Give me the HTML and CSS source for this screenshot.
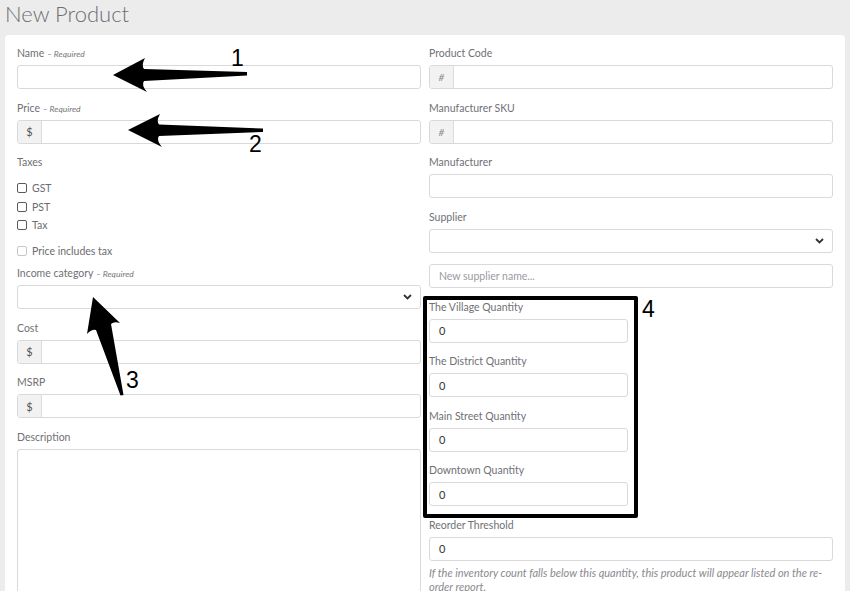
FILE: index.html
```html
<!DOCTYPE html>
<html>
<head>
<meta charset="utf-8">
<link rel="stylesheet" href="styles.css">
</head>
<body>
<div class="page">
  <h1 class="title">New Product</h1>
  <div class="card">
    <div class="col">
      <div class="field">
        <div class="label">Name <span class="req">– Required</span></div>
        <div class="input"></div>
      </div>
      <div class="field">
        <div class="label">Price <span class="req">– Required</span></div>
        <div class="input group"><span class="addon">$</span><span class="fill"></span></div>
      </div>
      <div class="label">Taxes</div>
      <div class="checks">
        <label class="check"><span class="box"></span>GST</label>
        <label class="check"><span class="box"></span>PST</label>
        <label class="check"><span class="box"></span>Tax</label>
      </div>
      <label class="check disabled"><span class="box"></span>Price includes tax</label>
      <div class="field income">
        <div class="label">Income category <span class="req">– Required</span></div>
        <div class="input select"><svg class="chev" width="9" height="6" viewBox="0 0 9 6"><path d="M1 1 L4.5 4.5 L8 1" fill="none" stroke="#333" stroke-width="1.8"/></svg></div>
      </div>
      <div class="field">
        <div class="label">Cost</div>
        <div class="input group"><span class="addon">$</span><span class="fill"></span></div>
      </div>
      <div class="field">
        <div class="label">MSRP</div>
        <div class="input group"><span class="addon">$</span><span class="fill"></span></div>
      </div>
      <div class="field">
        <div class="label">Description</div>
        <div class="input textarea"></div>
      </div>
    </div>
    <div class="col">
      <div class="field">
        <div class="label">Product Code</div>
        <div class="input group"><span class="addon hash">#</span><span class="fill"></span></div>
      </div>
      <div class="field">
        <div class="label">Manufacturer SKU</div>
        <div class="input group"><span class="addon hash">#</span><span class="fill"></span></div>
      </div>
      <div class="field">
        <div class="label">Manufacturer</div>
        <div class="input"></div>
      </div>
      <div class="field">
        <div class="label">Supplier</div>
        <div class="input select"><svg class="chev" width="9" height="6" viewBox="0 0 9 6"><path d="M1 1 L4.5 4.5 L8 1" fill="none" stroke="#333" stroke-width="1.8"/></svg></div>
      </div>
      <div class="field">
        <div class="input"><span class="placeholder">New supplier name...</span></div>
      </div>
      <div class="field qty">
        <div class="label">The Village Quantity</div>
        <div class="input"><span class="value">0</span></div>
      </div>
      <div class="field qty">
        <div class="label">The District Quantity</div>
        <div class="input"><span class="value">0</span></div>
      </div>
      <div class="field qty">
        <div class="label">Main Street Quantity</div>
        <div class="input"><span class="value">0</span></div>
      </div>
      <div class="field qty">
        <div class="label">Downtown Quantity</div>
        <div class="input"><span class="value">0</span></div>
      </div>
      <div class="field reorder">
        <div class="label">Reorder Threshold</div>
        <div class="input"><span class="value">0</span></div>
        <p class="help">If the inventory count falls below this quantity, this product will appear listed on the re-order report.</p>
      </div>
    </div>
  </div>

  <div class="highlight"></div>
  <svg class="annot" width="850" height="591" viewBox="0 0 850 591">
    <path d="M113,75 L145,58 Q141,65 144,69 L247,72 L247,75.5 L144,81 Q141,85 147,92 Z" fill="#000"/>
    <path d="M128,130 L160,114 Q156,121 159,124.5 L263,128.5 L263,132 L159,136 Q156,140 162,147 Z" fill="#000"/>
    <path d="M93,297 L120,323 Q114,321 111,324 L123.5,395 L120.5,395.5 L96,330 Q92,329 87,334 Z" fill="#000"/>
    <text x="231" y="66" class="num">1</text>
    <text x="249" y="152" class="num">2</text>
    <text x="126" y="388" class="num">3</text>
    <text x="642" y="317" class="num">4</text>
  </svg>
</div>
</body>
</html>
```

FILE: styles.css
```css
* { box-sizing: border-box; }
html, body {
  margin: 0;
  padding: 0;
  background: #ececec;
}
body {
  font-family: Lato, "Open Sans", sans-serif;
  color: #6b6b70;
  width: 850px;
  height: 591px;
  overflow: hidden;
}
.page {
  position: relative;
  width: 850px;
  height: 591px;
}
.title {
  margin: 0;
  padding-left: 5px;
  font-size: 22px;
  line-height: 27px;
  font-weight: 300;
  color: #6e6e73;
  height: 27px;
}
.card {
  margin: 8px 0 0 5px;
  width: 840px;
  height: 600px;
  background: #fff;
  border-radius: 4px;
  padding: 11px 12px 0 12px;
  display: flex;
  gap: 8px;
}
.col {
  width: 404px;
  display: flex;
  flex-direction: column;
}
.field {
  margin-bottom: 11.5px;
}
.label {
  font-size: 10.5px;
  line-height: 14px;
  height: 14px;
  margin-bottom: 5px;
  color: #707075;
  white-space: nowrap;
}
.req {
  font-size: 8.5px;
  font-style: italic;
  color: #77777c;
}
.input {
  height: 24px;
  border: 1px solid #d9d9dc;
  border-radius: 3px;
  background: #fff;
  display: flex;
  align-items: center;
  font-size: 11px;
  padding: 0 9px;
  position: relative;
}
.input.group {
  padding: 0;
  overflow: hidden;
}
.addon {
  width: 24px;
  height: 100%;
  background: #f2f2f3;
  border-right: 1px solid #dcdcdf;
  display: flex;
  align-items: center;
  justify-content: center;
  font-size: 11px;
  color: #555;
}
.addon.hash {
  font-style: italic;
  font-size: 10px;
  color: #888;
}
.fill { flex: 1; }
.select { justify-content: flex-end; padding-right: 8px; }
.chev { display: block; }
.placeholder { color: #9a9a9f; font-size: 10.5px; }
.value { color: #333; font-size: 11px; }
.textarea { height: 160px; }
.checks {
  margin-top: 5px;
  display: flex;
  flex-direction: column;
}
.check {
  display: flex;
  align-items: center;
  height: 18.5px;
  font-size: 10.5px;
  color: #6b6b70;
}
.box {
  width: 10px;
  height: 10px;
  border: 1px solid #5a5a5e;
  border-radius: 2px;
  margin-right: 5px;
  background: #fff;
}
.check.disabled {
  margin-top: 7px;
  margin-bottom: 6px;
}
.check.disabled .box { border-color: #c8c8cb; }
.qty .input { width: 199px; }
.help {
  margin: 5px 0 0 0;
  font-size: 11px;
  line-height: 14px;
  font-style: italic;
  color: #8a8a8f;
}
.highlight {
  position: absolute;
  left: 423px;
  top: 296px;
  width: 215px;
  height: 222px;
  border: 4px solid #000;
  border-radius: 2px;
}
.annot {
  position: absolute;
  left: 0;
  top: 0;
}
.num {
  font-family: "Liberation Sans", Arial, sans-serif;
  font-size: 23px;
  fill: #000;
}
```
